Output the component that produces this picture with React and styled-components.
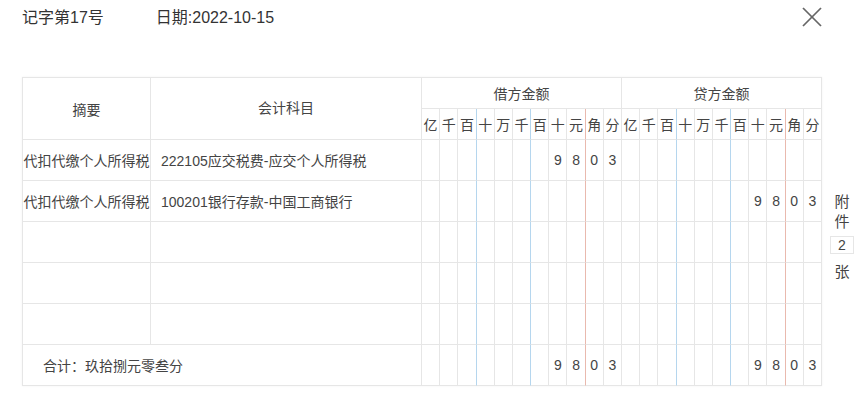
import React from 'react';
import styled, { createGlobalStyle } from 'styled-components';

const GlobalStyle = createGlobalStyle`
  body {
    margin: 0;
    background: #fff;
    font-family: "Liberation Sans", "Noto Sans CJK SC", sans-serif;
    color: #333;
  }
`;

const UNITS = ['亿', '千', '百', '十', '万', '千', '百', '十', '元', '角', '分'];

const rows = [
  { summary: '代扣代缴个人所得税', subject: '222105应交税费-应交个人所得税', debit: 9803, credit: 0 },
  { summary: '代扣代缴个人所得税', subject: '100201银行存款-中国工商银行', debit: 0, credit: 9803 },
  { summary: '', subject: '', debit: 0, credit: 0 },
  { summary: '', subject: '', debit: 0, credit: 0 },
  { summary: '', subject: '', debit: 0, credit: 0 },
];

// cents -> 11 cells, leading zeros left blank
function toCells(cents) {
  if (!cents) return Array(11).fill('');
  const s = String(cents).padStart(11, '0');
  const first = s.search(/[1-9]/);
  return s.split('').map((d, i) => (i >= first ? d : ''));
}

function lineColor(i) {
  if (i === 2 || i === 5) return '#b5d6ee';
  if (i === 8) return '#e9b9ae';
  return '#e6e6e6';
}

function Voucher() {
  const total = rows.reduce((a, r) => ({ d: a.d + r.debit, c: a.c + r.credit }), { d: 0, c: 0 });

  const digitCells = (cents, key) =>
    toCells(cents).map((d, i) => (
      <Digit key={key + i} $line={lineColor(i)}>{d}</Digit>
    ));

  return (
    <Page>
      <TopBar>
        <Title>记字第17号</Title>
        <DateText>日期:2022-10-15</DateText>
        <Close viewBox="0 0 20 20">
          <line x1="1" y1="1" x2="19" y2="19" />
          <line x1="19" y1="1" x2="1" y2="19" />
        </Close>
      </TopBar>

      <Main>
        <Grid>
          <HeadCell $rows={2}>摘要</HeadCell>
          <HeadCell $rows={2} $up>会计科目</HeadCell>
          <HeadCell $cols={11}>借方金额</HeadCell>
          <HeadCell $cols={11}>贷方金额</HeadCell>
          {[...UNITS, ...UNITS].map((u, i) => (
            <Unit key={i} $line={lineColor(i % 11)}>{u}</Unit>
          ))}

          {rows.map((r, n) => (
            <React.Fragment key={n}>
              <Summary>{r.summary}</Summary>
              <Subject>{r.subject}</Subject>
              {digitCells(r.debit, 'd' + n)}
              {digitCells(r.credit, 'c' + n)}
            </React.Fragment>
          ))}

          <Total>合计：玖拾捌元零叁分</Total>
          {digitCells(total.d, 'td')}
          {digitCells(total.c, 'tc')}
        </Grid>

        <Attach>
          <span>附</span>
          <span>件</span>
          <CountBox>2</CountBox>
          <span>张</span>
        </Attach>
      </Main>
    </Page>
  );
}

const Page = styled.div`
  width: 867px;
  height: 403px;
  overflow: hidden;
`;

const TopBar = styled.div`
  display: flex;
  align-items: flex-start;
  padding: 8px 45px 0 22px;
  font-size: 16px;
  line-height: 20px;
  color: #333;
`;

const Title = styled.span``;

const DateText = styled.span`
  margin-left: 52px;
`;

const Close = styled.svg`
  margin-left: auto;
  margin-top: -1px;
  width: 20px;
  height: 20px;
  stroke: #666;
  stroke-width: 1.7;
`;

const Main = styled.div`
  display: flex;
  margin-top: 49px;
  padding-left: 22px;
`;

const Grid = styled.div`
  display: grid;
  box-sizing: border-box;
  width: 800px;
  grid-template-columns: 128px 271px repeat(22, 1fr);
  grid-template-rows: 31px 31px repeat(6, 41px);
  border-top: 1px solid #e6e6e6;
  border-left: 1px solid #e6e6e6;
  box-shadow: 0 0 2px rgba(0, 0, 0, 0.06);
  font-size: 14px;
  color: #444;
`;

const Cell = styled.div`
  box-sizing: border-box;
  border-right: 1px solid #e6e6e6;
  border-bottom: 1px solid #e6e6e6;
  display: flex;
  align-items: center;
  min-width: 0;
  white-space: nowrap;
`;

const HeadCell = styled(Cell)`
  justify-content: center;
  grid-row: span ${p => p.$rows || 1};
  grid-column: span ${p => p.$cols || 1};
  padding-bottom: ${p => (p.$up ? '4px' : '0')};
`;

const Unit = styled(Cell)`
  justify-content: center;
  border-right-color: ${p => p.$line};
`;

const Digit = styled(Cell)`
  justify-content: center;
  border-right-color: ${p => p.$line};
`;

const Summary = styled(Cell)`
  justify-content: center;
  overflow: hidden;
`;

const Subject = styled(Cell)`
  padding-left: 10px;
`;

const Total = styled(Cell)`
  grid-column: span 2;
  padding-left: 20px;
`;

const Attach = styled.div`
  display: flex;
  flex-direction: column;
  align-items: center;
  width: 24px;
  margin-left: 8px;
  padding-top: 115px;
  font-size: 15px;
  line-height: 20px;
  color: #444;
`;

const CountBox = styled.div`
  box-sizing: border-box;
  width: 24px;
  height: 18px;
  margin: 4px 0 8px;
  border: 1px solid #e6e6e6;
  font-size: 14px;
  line-height: 16px;
  text-align: center;
`;

export default function App() {
  return (
    <>
      <GlobalStyle />
      <Voucher />
    </>
  );
}
